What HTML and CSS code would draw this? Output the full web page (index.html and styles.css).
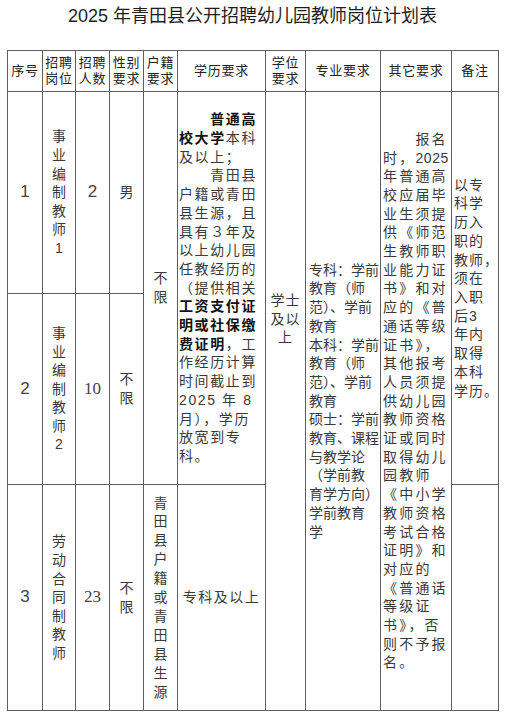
FILE: index.html
```html
<!DOCTYPE html>
<html lang="zh">
<head>
<meta charset="utf-8">
<title>2025年青田县公开招聘幼儿园教师岗位计划表</title>
<link rel="stylesheet" href="styles.css">
</head>
<body>
<h1 class="title"><span class="lat">2025</span> 年青田县公开招聘幼儿园教师岗位计划表</h1>
<table class="plan">
<colgroup>
<col class="c-no"><col class="c-post"><col class="c-num"><col class="c-sex"><col class="c-hukou"><col class="c-edu"><col class="c-deg"><col class="c-major"><col class="c-other"><col class="c-note">
</colgroup>
<thead>
<tr class="r-head">
<th>序号</th><th>招聘<br>岗位</th><th>招聘<br>人数</th><th>性别<br>要求</th><th>户籍<br>要求</th><th>学历要求</th><th>学位<br>要求</th><th>专业要求</th><th>其它要求</th><th>备注</th>
</tr>
</thead>
<tbody>
<tr class="r1">
<td class="num">1</td>
<td class="vert">事<br>业<br>编<br>制<br>教<br>师<br><span class="lat">1</span></td>
<td class="num">2</td>
<td class="vert">男</td>
<td class="vert" rowspan="2">不<br>限</td>
<td class="edu" rowspan="2"><b>　　普通高</b><br><b>校大学</b>本科<br>及以上；<br>　　青田县<br>户籍或青田<br>县生源，且<br>具有３年及<br>以上幼儿园<br>任教经历的<br>（提供相关<br><b>工资支付证</b><br><b>明或社保缴</b><br><b>费证明</b>，工<br>作经历计算<br>时间截止到<br><span class="lat">2025</span> 年 <span class="lat">8</span><br>月），学历<br>放宽到专<br>科。</td>
<td class="deg" rowspan="3">学士<br>及以<br>上</td>
<td class="major" rowspan="3">专科：学前<br>教育（师<br>范）、学前<br>教育<br>本科：学前<br>教育（师<br>范）、学前<br>教育<br>硕士：学前<br>教育、课程<br>与教学论<br>（学前教<br>育学方向）<br>学前教育<br>学</td>
<td class="other" rowspan="3">　　报名<br>时，<span class="lat">2025</span><br>年普通高<br>校应届毕<br>业生须提<br>供《师范<br>生教师职<br>业能力证<br>书》和对<br>应的《普<br>通话等级<br>证书》，<br>其他报考<br>人员须提<br>供幼儿园<br>教师资格<br>证或同时<br>取得幼儿<br>园教师<br>《中小学<br>教师资格<br>考试合格<br>证明》和<br>对应的<br>《普通话<br>等级证<br>书》，否<br>则不予报<br>名。</td>
<td class="note" rowspan="2">以专<br>科学<br>历入<br>职的<br>教师，<br>须在<br>入职<br>后<span class="lat">3</span><br>年内<br>取得<br>本科<br>学历。</td>
</tr>
<tr class="r2">
<td class="num">2</td>
<td class="vert">事<br>业<br>编<br>制<br>教<br>师<br><span class="lat">2</span></td>
<td class="num serif">10</td>
<td class="vert">不<br>限</td>
</tr>
<tr class="r3">
<td class="num">3</td>
<td class="vert">劳<br>动<br>合<br>同<br>制<br>教<br>师</td>
<td class="num serif">23</td>
<td class="vert">不<br>限</td>
<td class="vert tall">青<br>田<br>县<br>户<br>籍<br>或<br>青<br>田<br>县<br>生<br>源</td>
<td class="edu3">专科及以上</td>
<td class="note"></td>
</tr>
</tbody>
</table>
</body>
</html>
```

FILE: styles.css
```css
* { box-sizing: border-box; }
html, body { margin: 0; padding: 0; background: #fff; }
body {
  width: 505px;
  font-family: "Liberation Sans", "Noto Sans CJK SC", sans-serif;
  color: #333;
}
.title {
  margin: 0;
  height: 50px;
  font-size: 18px;
  font-weight: normal;
  line-height: 32px;
  text-align: center;
  color: #1e1e1e;
}
.plan {
  margin-left: 7px;
  width: 491px;
  table-layout: fixed;
  border-collapse: collapse;
}
.c-no { width: 35px; }
.c-post { width: 33px; }
.c-num { width: 34px; }
.c-sex { width: 34px; }
.c-hukou { width: 34px; }
.c-edu { width: 88px; }
.c-deg { width: 40px; }
.c-major { width: 75px; }
.c-other { width: 71px; }
.c-note { width: 47px; }

.plan th, .plan td {
  border: 1px solid #5e5e5e;
  padding: 0;
  vertical-align: middle;
  white-space: nowrap;
  overflow: hidden;
}
.plan th {
  font-size: 13px;
  font-weight: normal;
  line-height: 16px;
  text-align: center;
  color: #222;
  letter-spacing: 0.8px;
}
.r-head { height: 41px; }
.r1 { height: 202px; }
.r2 { height: 191px; }
.r3 { height: 226px; }

.plan td { font-size: 14px; line-height: 18.7px; color: #3a3a3a; }
.lat { font-family: "Liberation Sans", sans-serif; }
.plan .num {
  text-align: center;
  font-size: 17px;
  color: #444;
}
.plan .serif { font-family: "Liberation Serif", serif; }
.plan .vert {
  text-align: center;
  line-height: 18.6px;
}
.plan .tall { line-height: 18.9px; }
.plan .edu {
  text-align: left;
  padding-left: 1px;
  letter-spacing: 1.6px;
}
.plan .edu b { color: #111; font-weight: 700; }
.plan .deg {
  vertical-align: top;
  padding-top: 199px;
  text-align: center;
  letter-spacing: 1px;
}
.plan .major {
  text-align: left;
  padding-left: 3px;
}
.plan .other {
  text-align: left;
  padding-left: 2px;
  letter-spacing: 2.2px;
}
.plan .other .lat { letter-spacing: 0.6px; }
.plan .note {
  text-align: left;
  padding-left: 2px;
  letter-spacing: 1px;
}
.plan .edu3 {
  text-align: center;
  letter-spacing: 1.5px;
}
```
